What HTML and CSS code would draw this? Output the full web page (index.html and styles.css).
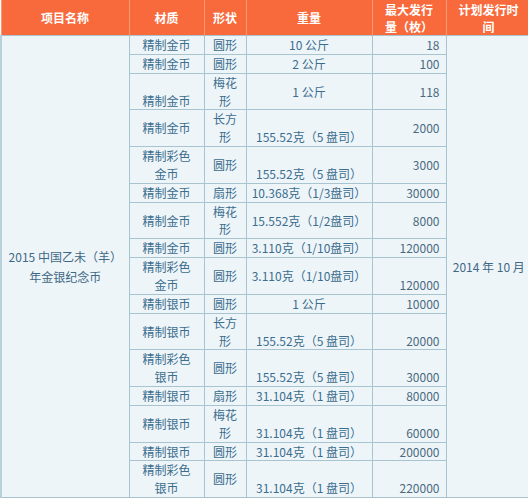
FILE: index.html
```html
<!DOCTYPE html>
<html lang="zh">
<head>
<meta charset="utf-8">
<link rel="stylesheet" href="styles.css">
</head>
<body>
<table class="coins">
  <colgroup>
    <col class="c-name"><col class="c-mat"><col class="c-shape"><col class="c-wt"><col class="c-qty"><col class="c-date">
  </colgroup>
  <thead>
    <tr>
      <th>项目名称</th><th>材质</th><th>形状</th><th>重量</th><th>最大发行<br>量（枚）</th><th>计划发行时<br>间</th>
    </tr>
  </thead>
  <tbody>
    <tr>
      <td class="name" rowspan="16">2015 中国乙未（羊）<br>年金银纪念币</td>
      <td>精制金币</td><td>圆形</td><td>10 公斤</td><td class="qty">18</td>
      <td class="date" rowspan="16">2014 年 10 月</td>
    </tr>
    <tr><td>精制金币</td><td>圆形</td><td>2 公斤</td><td class="qty">100</td></tr>
    <tr><td class="bot">精制金币</td><td>梅花<br>形</td><td>1 公斤</td><td class="qty">118</td></tr>
    <tr><td>精制金币</td><td>长方<br>形</td><td class="bot">155.52克（5 盘司）</td><td class="qty">2000</td></tr>
    <tr><td>精制彩色<br>金币</td><td>圆形</td><td class="bot">155.52克（5 盘司）</td><td class="qty">3000</td></tr>
    <tr><td>精制金币</td><td>扇形</td><td>10.368克（1/3盘司）</td><td class="qty">30000</td></tr>
    <tr><td>精制金币</td><td>梅花<br>形</td><td>15.552克（1/2盘司）</td><td class="qty">8000</td></tr>
    <tr><td>精制金币</td><td>圆形</td><td>3.110克（1/10盘司）</td><td class="qty">120000</td></tr>
    <tr><td>精制彩色<br>金币</td><td>圆形</td><td>3.110克（1/10盘司）</td><td class="qty bot">120000</td></tr>
    <tr><td>精制银币</td><td>圆形</td><td>1 公斤</td><td class="qty">10000</td></tr>
    <tr><td>精制银币</td><td>长方<br>形</td><td class="bot">155.52克（5 盘司）</td><td class="qty bot">20000</td></tr>
    <tr><td>精制彩色<br>银币</td><td>圆形</td><td class="bot">155.52克（5 盘司）</td><td class="qty bot">30000</td></tr>
    <tr><td>精制银币</td><td>扇形</td><td>31.104克（1 盘司）</td><td class="qty">80000</td></tr>
    <tr><td>精制银币</td><td>梅花<br>形</td><td class="bot">31.104克（1 盘司）</td><td class="qty bot">60000</td></tr>
    <tr><td>精制银币</td><td>圆形</td><td>31.104克（1 盘司）</td><td class="qty">200000</td></tr>
    <tr><td>精制彩色<br>银币</td><td>圆形</td><td class="bot">31.104克（1 盘司）</td><td class="qty bot">220000</td></tr>
  </tbody>
</table>
</body>
</html>
```

FILE: styles.css
```css
html, body {
  margin: 0;
  padding: 0;
  background: #ffffff;
}

.coins {
  border-collapse: collapse;
  table-layout: fixed;
  width: 530px;
  font-family: "Noto Sans CJK SC", "Noto Sans", sans-serif;
  font-size: 12px;
  color: #3b6d8e;
}

.c-name { width: 128px; }
.c-mat { width: 75px; }
.c-shape { width: 42px; }
.c-wt { width: 126px; }
.c-qty { width: 74px; }
.c-date { width: 85px; }

.coins th {
  background: #f86a3c;
  color: #ffffff;
  font-weight: bold;
  line-height: 17px;
  padding: 0 2px;
  height: 35px;
  text-align: center;
  vertical-align: middle;
  border-left: 1px solid #f79a78;
  border-right: 1px solid #f79a78;
}

.coins td {
  background: #eef5f9;
  border: 1px solid #a9c4d1;
  line-height: 17.85px;
  padding: 0 3px;
  text-align: center;
  vertical-align: middle;
  white-space: nowrap;
}

.coins td.qty {
  text-align: right;
  padding-right: 6px;
  color: #4b6a80;
}

.coins td.bot {
  vertical-align: bottom;
}

.coins td.name {
  border-left: 2px solid #b9d0db;
  color: #3e6885;
  line-height: 20px;
}

.coins td.date {
  color: #3e6885;
  border-right: none;
}
```
